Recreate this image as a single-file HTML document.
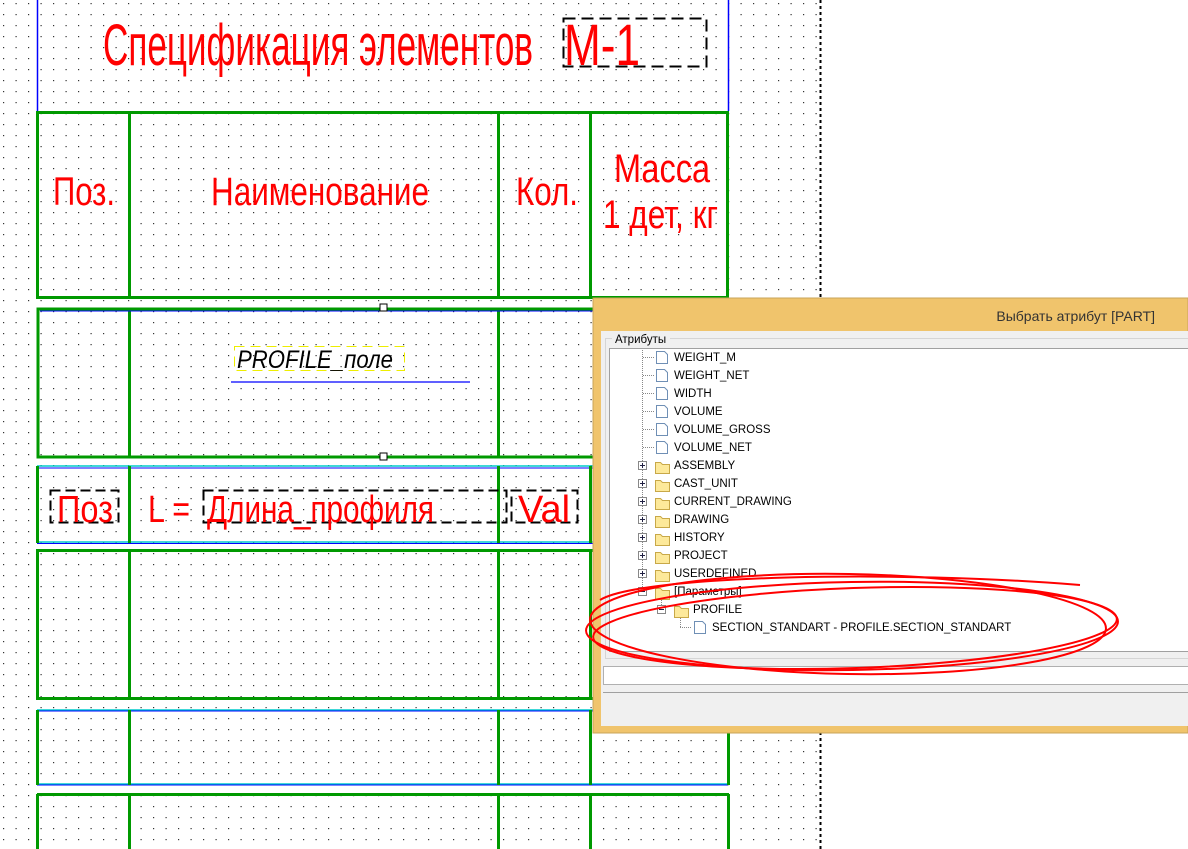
<!DOCTYPE html>
<html><head><meta charset="utf-8"><style>
html,body{margin:0;padding:0;width:1188px;height:849px;overflow:hidden;background:#fff}
svg{display:block}
text{font-family:"Liberation Sans","DejaVu Sans",sans-serif}
</style></head><body>
<svg width="1188" height="849" viewBox="0 0 1188 849" xmlns="http://www.w3.org/2000/svg">
<defs>
<pattern id="dots" x="3" y="3" width="12.5" height="11" patternUnits="userSpaceOnUse">
<rect x="0" y="0" width="1.2" height="1.2" fill="#333"/>
</pattern>
</defs>
<rect x="0" y="0" width="820" height="849" fill="url(#dots)"/>
<line x1="820.5" y1="0" x2="820.5" y2="849" stroke="#000" stroke-width="2" stroke-dasharray="3,3"/>

<!-- top title area -->
<line x1="37.5" y1="0" x2="37.5" y2="111" stroke="#00f" stroke-width="1.5"/>
<line x1="728.5" y1="0" x2="728.5" y2="111" stroke="#00f" stroke-width="1.5"/>
<text x="103" y="65" font-size="58" fill="#f00" textLength="430" lengthAdjust="spacingAndGlyphs">Спецификация элементов</text>
<rect x="563.5" y="18.5" width="143" height="48" fill="none" stroke="#000" stroke-width="2" stroke-dasharray="12,6"/>
<text x="564" y="65" font-size="58" fill="#f00" textLength="76" lengthAdjust="spacingAndGlyphs">М-1</text>

<!-- header row -->
<g stroke="#090" stroke-width="3" fill="none">
<rect x="37.5" y="112.5" width="690" height="185"/>
<line x1="129.5" y1="112" x2="129.5" y2="298"/>
<line x1="498.5" y1="112" x2="498.5" y2="298"/>
<line x1="590.5" y1="112" x2="590.5" y2="298"/>
</g>
<text x="53" y="205" font-size="40" fill="#f00" textLength="62" lengthAdjust="spacingAndGlyphs">Поз.</text>
<text x="211" y="205" font-size="40" fill="#f00" textLength="218" lengthAdjust="spacingAndGlyphs">Наименование</text>
<text x="516" y="205" font-size="40" fill="#f00" textLength="62" lengthAdjust="spacingAndGlyphs">Кол.</text>
<text x="614" y="182" font-size="40" fill="#f00" textLength="96" lengthAdjust="spacingAndGlyphs">Масса</text>
<text x="603" y="228" font-size="40" fill="#f00" textLength="115" lengthAdjust="spacingAndGlyphs">1 дет, кг</text>

<!-- row 2 -->
<g stroke="#090" stroke-width="3" fill="none">
<rect x="38" y="309" width="690" height="148"/>
<line x1="129.5" y1="309" x2="129.5" y2="457"/>
<line x1="498.5" y1="309" x2="498.5" y2="457"/>
</g>
<line x1="40" y1="311" x2="728" y2="311" stroke="#00f" stroke-width="1"/>
<rect x="380" y="304" width="7" height="7" fill="#fff" stroke="#000"/>
<rect x="380" y="453" width="7" height="7" fill="#fff" stroke="#000"/>
<rect x="234.5" y="346.5" width="170" height="24" fill="none" stroke="#ee0" stroke-width="1" stroke-dasharray="10,6"/>
<text x="237" y="368" font-size="25" font-style="italic" fill="#000" textLength="156" lengthAdjust="spacingAndGlyphs">PROFILE_поле</text>
<line x1="231" y1="382" x2="470" y2="382" stroke="#00f" stroke-width="1.2"/>

<!-- row 3 -->
<line x1="37" y1="466" x2="728" y2="466" stroke="#0cc" stroke-width="1.5"/>
<line x1="37" y1="468" x2="728" y2="468" stroke="#00f" stroke-width="1"/>
<line x1="37" y1="542" x2="728" y2="542" stroke="#0cc" stroke-width="1.5"/>
<line x1="37" y1="543.5" x2="728" y2="543.5" stroke="#00f" stroke-width="1"/>
<g stroke="#090" stroke-width="3">
<line x1="37.5" y1="466" x2="37.5" y2="543"/>
<line x1="129.5" y1="466" x2="129.5" y2="543"/>
<line x1="498.5" y1="466" x2="498.5" y2="543"/>
<line x1="590.5" y1="466" x2="590.5" y2="543"/>
</g>
<g fill="none" stroke="#000" stroke-width="2" stroke-dasharray="10,5">
<rect x="50.5" y="490.5" width="68" height="32"/>
<rect x="203.5" y="490.5" width="303" height="32"/>
<rect x="511.5" y="490.5" width="66" height="32"/>
</g>
<text x="57" y="522" font-size="38" fill="#f00" textLength="56" lengthAdjust="spacingAndGlyphs">Поз</text>
<text x="148" y="522" font-size="38" fill="#f00" textLength="42" lengthAdjust="spacingAndGlyphs">L =</text>
<text x="207" y="522" font-size="38" fill="#f00" textLength="227" lengthAdjust="spacingAndGlyphs">Длина_профиля</text>
<text x="518" y="522" font-size="38" fill="#f00" textLength="52" lengthAdjust="spacingAndGlyphs">Val</text>

<!-- row 4 -->
<g stroke="#090" stroke-width="3" fill="none">
<rect x="37.5" y="550.5" width="690" height="148"/>
<line x1="129.5" y1="550" x2="129.5" y2="699"/>
<line x1="498.5" y1="550" x2="498.5" y2="699"/>
<line x1="590.5" y1="550" x2="590.5" y2="699"/>
</g>
<!-- row 5 -->
<line x1="37" y1="710" x2="728" y2="710" stroke="#0cc" stroke-width="1.5"/>
<line x1="37" y1="711" x2="728" y2="711" stroke="#00f" stroke-width="1"/>
<line x1="37" y1="784" x2="728" y2="784" stroke="#0cc" stroke-width="1.5"/>
<line x1="37" y1="785" x2="728" y2="785" stroke="#00f" stroke-width="1"/>
<g stroke="#090" stroke-width="3">
<line x1="37.5" y1="710" x2="37.5" y2="785"/>
<line x1="129.5" y1="710" x2="129.5" y2="785"/>
<line x1="498.5" y1="710" x2="498.5" y2="785"/>
<line x1="590.5" y1="710" x2="590.5" y2="785"/>
<line x1="728.5" y1="710" x2="728.5" y2="785"/>
</g>
<!-- row 6 -->
<g stroke="#090" stroke-width="3">
<line x1="37" y1="794.5" x2="729" y2="794.5"/>
<line x1="37.5" y1="794" x2="37.5" y2="849"/>
<line x1="129.5" y1="794" x2="129.5" y2="849"/>
<line x1="498.5" y1="794" x2="498.5" y2="849"/>
<line x1="590.5" y1="794" x2="590.5" y2="849"/>
<line x1="728.5" y1="794" x2="728.5" y2="849"/>
</g>

<!-- dialog -->
<rect x="593" y="298" width="595" height="435" fill="#f0c46c" stroke="#c9a45a"/>
<text x="1155" y="321" font-size="14" fill="#333" text-anchor="end">Выбрать атрибут [PART]</text>
<rect x="601" y="331" width="587" height="395" fill="#f0f0f0"/>
<rect x="605.5" y="338.5" width="590" height="320" fill="none" stroke="#d5d5d5"/>
<rect x="612" y="335" width="58" height="10" fill="#f0f0f0"/>
<text x="615" y="343" font-size="11.5" fill="#000">Атрибуты</text>
<rect x="609.5" y="348.5" width="590" height="303" fill="#fff" stroke="#a0a0a0"/>
<g font-size="11.5" fill="#000">
<text x="674" y="361">WEIGHT_M</text>
<text x="674" y="379">WEIGHT_NET</text>
<text x="674" y="397">WIDTH</text>
<text x="674" y="415">VOLUME</text>
<text x="674" y="433">VOLUME_GROSS</text>
<text x="674" y="451">VOLUME_NET</text>
<text x="674" y="469">ASSEMBLY</text>
<text x="674" y="487">CAST_UNIT</text>
<text x="674" y="505">CURRENT_DRAWING</text>
<text x="674" y="523">DRAWING</text>
<text x="674" y="541">HISTORY</text>
<text x="674" y="559">PROJECT</text>
<text x="674" y="577">USERDEFINED</text>
<text x="674" y="595">[Параметры]</text>
<text x="693" y="613">PROFILE</text>
<text x="712" y="631">SECTION_STANDART  -  PROFILE.SECTION_STANDART</text>
</g>
<g stroke="#888" stroke-width="1" stroke-dasharray="1,1">
<line x1="642.5" y1="350" x2="642.5" y2="591"/>
<line x1="643" y1="357.5" x2="655" y2="357.5"/><line x1="643" y1="375.5" x2="655" y2="375.5"/>
<line x1="643" y1="393.5" x2="655" y2="393.5"/><line x1="643" y1="411.5" x2="655" y2="411.5"/>
<line x1="643" y1="429.5" x2="655" y2="429.5"/><line x1="643" y1="447.5" x2="655" y2="447.5"/>
<line x1="661.5" y1="598" x2="661.5" y2="606"/>
<line x1="680.5" y1="616" x2="680.5" y2="627"/>
<line x1="680" y1="627.5" x2="692" y2="627.5"/>
</g>
<g fill="#fff" stroke="#6f8fb5">
<path d="M656.5 351.5h8l3 3v9h-11z"/><path d="M656.5 369.5h8l3 3v9h-11z"/>
<path d="M656.5 387.5h8l3 3v9h-11z"/><path d="M656.5 405.5h8l3 3v9h-11z"/>
<path d="M656.5 423.5h8l3 3v9h-11z"/><path d="M656.5 441.5h8l3 3v9h-11z"/>
<path d="M694.5 621.5h8l3 3v9h-11z"/>
</g>
<g fill="#fde99a" stroke="#c8a848">
<path d="M655.5 462.5h5l2 2h7v9h-14z"/><path d="M655.5 480.5h5l2 2h7v9h-14z"/>
<path d="M655.5 498.5h5l2 2h7v9h-14z"/><path d="M655.5 516.5h5l2 2h7v9h-14z"/>
<path d="M655.5 534.5h5l2 2h7v9h-14z"/><path d="M655.5 552.5h5l2 2h7v9h-14z"/>
<path d="M655.5 570.5h5l2 2h7v9h-14z"/><path d="M655.5 588.5h5l2 2h7v9h-14z"/>
<path d="M674.5 606.5h5l2 2h7v9h-14z"/>
</g>
<g fill="#fff" stroke="#888">
<rect x="638.5" y="461.5" width="8" height="8"/><rect x="638.5" y="479.5" width="8" height="8"/>
<rect x="638.5" y="497.5" width="8" height="8"/><rect x="638.5" y="515.5" width="8" height="8"/>
<rect x="638.5" y="533.5" width="8" height="8"/><rect x="638.5" y="551.5" width="8" height="8"/>
<rect x="638.5" y="569.5" width="8" height="8"/><rect x="638.5" y="587.5" width="8" height="8"/>
<rect x="657.5" y="605.5" width="8" height="8"/>
</g>
<g stroke="#224" stroke-width="1">
<path d="M640 465.5h5M642.5 463v5M640 483.5h5M642.5 481v5M640 501.5h5M642.5 499v5M640 519.5h5M642.5 517v5M640 537.5h5M642.5 535v5M640 555.5h5M642.5 553v5M640 573.5h5M642.5 571v5M640 591.5h5M659 609.5h5"/>
</g>
<rect x="603.5" y="666.5" width="590" height="18" fill="#fff" stroke="#b0b0b0"/>
<line x1="603" y1="692.5" x2="1188" y2="692.5" stroke="#a0a0a0"/>

<!-- red scribble -->
<g fill="none" stroke="#f00" stroke-width="2">
<ellipse cx="852" cy="626" rx="266" ry="44" transform="rotate(-1 852 626)"/>
<ellipse cx="848" cy="624" rx="258" ry="50" transform="rotate(1 848 624)"/>
<ellipse cx="855" cy="628" rx="262" ry="40" transform="rotate(-2 855 628)"/>
<path d="M600 600 C640 575 900 570 1080 585"/>
</g>
</svg>
</body></html>
